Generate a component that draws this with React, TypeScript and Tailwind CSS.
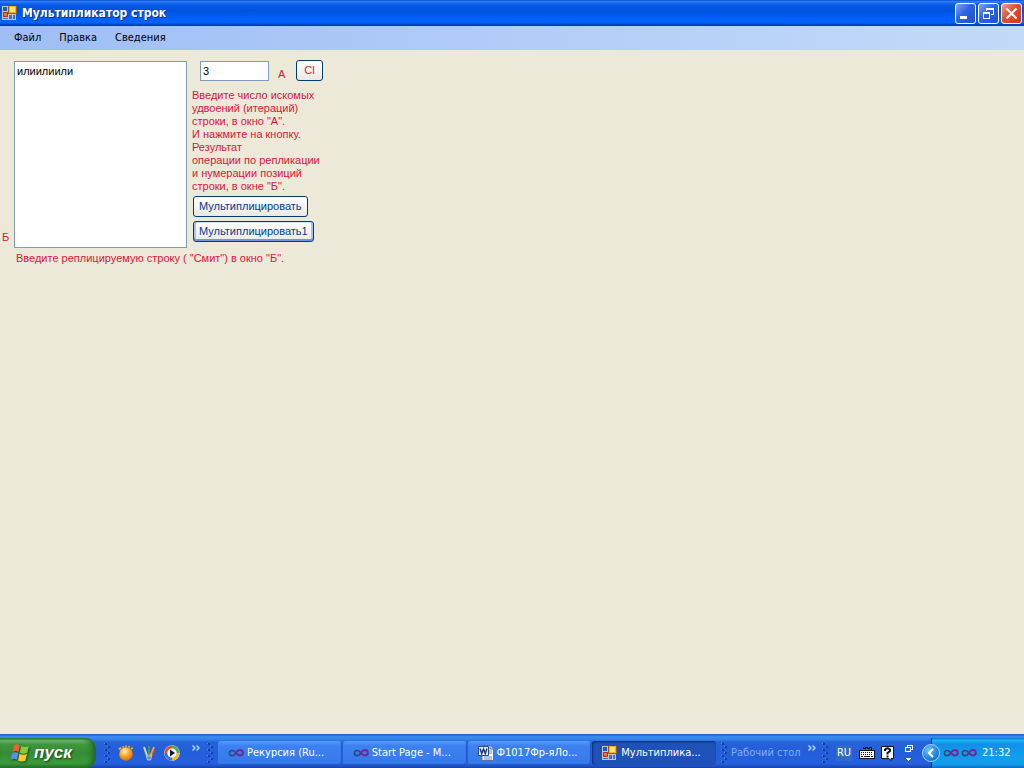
import * as React from 'react';
import { clsx } from 'clsx';

const uiFont = "font-['DejaVu_Sans_Condensed','DejaVu_Sans',sans-serif]";

const FormIcon = () => (
  <svg className="w-4 h-4 shrink-0" viewBox="0 0 16 16" shapeRendering="crispEdges" aria-hidden="true">
    <rect x="0" y="1" width="14" height="14" fill="#c4c8cc" />
    <rect x="1" y="2" width="4" height="4" fill="#2458c8" />
    <rect x="1" y="7" width="5" height="5" fill="#c82818" />
    <rect x="2" y="8" width="3" height="3" fill="#f07040" />
    <rect x="1" y="13" width="5" height="1" fill="#3a6ce0" />
    <rect x="7" y="10" width="3" height="4" fill="#3a6ce0" />
    <rect x="11" y="10" width="2" height="4" fill="#3a6ce0" />
    <rect x="6" y="1" width="9" height="8" fill="#8c6410" />
    <rect x="7" y="1" width="7" height="7" fill="#f0b020" />
    <rect x="8" y="2" width="5" height="5" fill="#ffe070" />
  </svg>
);

const StudioIcon = () => (
  <svg className="w-4 h-4 shrink-0" viewBox="0 0 16 16" fill="none" aria-hidden="true">
    <path d="M8 8C6.500 5.500 5 5.500 4 5.500a2.600 2.600 0 0 0 0 5.200c1.500 0 2.500-.7 4-2.700" stroke="#274c78" strokeWidth="1.600" />
    <path d="M7 10c1-2.500 2.500-5 5-5a2.800 2.800 0 0 1 0 5.600c-1.800 0-2.600-1-4-2.600" stroke="#6b2a98" strokeWidth="2" />
    <path d="M4 7.500h2M11 8h2" stroke="#4c8498" />
  </svg>
);

const WordIcon = () => (
  <svg className="w-4 h-4 shrink-0" viewBox="0 0 16 16" aria-hidden="true">
    <path d="M4 .5h8l3.500 3.500v11.500H4z" fill="#f8faff" stroke="#59709e" />
    <path d="M12 .5V4h3.500" fill="#c4d2f0" stroke="#59709e" />
    <path d="M11 6h3M11 8h3M6 12h8M6 14h8" stroke="#7088b8" />
    <path d="M.5 1.500h10v9H.5z" fill="#e8f0ff" stroke="#274888" />
    <path d="M2 3.500l1.700 5L5.500 4l1.800 4.500L9 3.500" fill="none" stroke="#1c3c88" strokeWidth="1.500" />
  </svg>
);

const FlagIcon = () => (
  <svg className="w-5 h-5 shrink-0 drop-shadow-[1px_1px_1px_#1a4a1a]" viewBox="0 0 18 18" aria-hidden="true">
    <path d="M3.500 2C5.500.8 7.500 1 9 2L7.700 8c-1.700-1-3.700-1-5.500 0z" fill="#f0622c" />
    <path d="M10 2.600c2 1.200 4.500 1.200 7 0L15.500 9c-2.300 1-4.600 1-6.700-.4z" fill="#86cc38" />
    <path d="M2 9c2-1 3.800-1 5.500 0l-1.300 6C4.500 14 2.700 14 .6 15z" fill="#5c8cf4" />
    <path d="M8.500 9.700c2 1.200 4.300 1.200 6.800.2L13.800 16c-2.300 1-4.600 1-6.500-.3z" fill="#fbc92c" />
  </svg>
);

const BallIcon = () => (
  <svg className="w-4 h-4" viewBox="0 0 16 16" aria-hidden="true">
    <defs>
      <radialGradient id="ball" cx=".4" cy=".3" r=".7">
        <stop offset="0" stopColor="#fff6d0" />
        <stop offset=".4" stopColor="#ffb838" />
        <stop offset="1" stopColor="#e46800" />
      </radialGradient>
    </defs>
    <circle cx="8" cy="9" r="6.800" fill="url(#ball)" />
    <path d="M1 4.500l2-2M4.500 2.500l1.500-1M8 2V.500M10.500 2.500l1-1.500M13 4l1.800-1.300" stroke="#f4a030" strokeWidth="1.800" />
  </svg>
);

const BrushesIcon = () => (
  <svg className="w-4 h-4" viewBox="0 0 16 16" fill="none" aria-hidden="true">
    <path d="M6.500 12L3 2" stroke="#d8d0b8" strokeWidth="2" />
    <path d="M8 12V1" stroke="#48a850" strokeWidth="1.600" />
    <path d="M9 12l4-10" stroke="#e8a830" strokeWidth="2" />
    <path d="M10 13L14 5" stroke="#d03820" strokeWidth="1.600" />
    <path d="M5 9l1.500 6h3L11 9" fill="#9cb0cc" fillOpacity=".5" stroke="#bcc8dc" />
  </svg>
);

const MediaIcon = () => (
  <svg className="w-4 h-4" viewBox="0 0 16 16" fill="none" aria-hidden="true">
    <circle cx="8" cy="8" r="7.800" fill="#dce8f8" />
    <path d="M2 8a6 6 0 0 1 6-6" stroke="#e85020" strokeWidth="3" />
    <path d="M8 2a6 6 0 0 1 6 6" stroke="#50ac38" strokeWidth="3" />
    <path d="M14 8a6 6 0 0 1-6 6" stroke="#f4b820" strokeWidth="3" />
    <path d="M8 14a6 6 0 0 1-6-6" stroke="#3470d8" strokeWidth="3" />
    <circle cx="8" cy="8" r="4.500" fill="#f4f8ff" />
    <path d="M6 4.500L11 8l-5 3.500z" fill="#101828" />
  </svg>
);

const Grip = () => (
  <svg className="w-1.5 h-5 shrink-0" viewBox="0 0 6 20" shapeRendering="crispEdges" aria-hidden="true">
    {[0, 6, 12, 18].map((y) => (
      <React.Fragment key={y}>
        <rect x="1" y={y} width="2" height="2" fill="#103ca0" />
        <rect x="0" y={y} width="1" height="1" fill="#4a94f0" />
        {y < 18 && <rect x="4" y={y + 3} width="2" height="2" fill="#103ca0" />}
        {y < 18 && <rect x="3" y={y + 3} width="1" height="1" fill="#4a94f0" />}
      </React.Fragment>
    ))}
  </svg>
);

const Chevrons = () => (
  <svg className="w-2 h-1.5 mb-2.5 shrink-0" viewBox="0 0 8 6" fill="none" stroke="#b8d8ff" strokeWidth="1.400" aria-hidden="true">
    <path d="M.5.5L3 3 .5 5.500M4.500.5L7 3 4.500 5.500" />
  </svg>
);

const captionClass =
  'w-[21px] h-[21px] rounded-[3px] border border-white flex items-center justify-center';

const TitleBar = () => (
  <header className="h-[26px] shrink-0 flex items-center pl-0.5 pr-0.5 bg-[linear-gradient(#0a4ad0_0,#2f80f8_6%,#0a5ce8_16%,#0050e0_40%,#0061fa_72%,#0064ff_86%,#0048c8_94%,#0038a8_100%)]">
    <FormIcon />
    <h1 className={`${uiFont} ml-1 flex-1 text-[12px] font-bold text-white [text-shadow:1px_1px_#0a2a80]`}>
      Мультипликатор строк
    </h1>
    <div className="flex gap-0.5">
      <button type="button" aria-label="Свернуть" className={clsx(captionClass, 'bg-[linear-gradient(135deg,#7fa4f8,#2c62e4_45%,#1d50d8)]')}>
        <svg className="w-[13px] h-[13px]" viewBox="0 0 13 13" shapeRendering="crispEdges">
          <path d="M1 9h7v3H1z" fill="#fff" />
        </svg>
      </button>
      <button type="button" aria-label="Восстановить" className={clsx(captionClass, 'bg-[linear-gradient(135deg,#7fa4f8,#2c62e4_45%,#1d50d8)]')}>
        <svg className="w-[13px] h-[13px]" viewBox="0 0 13 13" fill="none" stroke="#fff" shapeRendering="crispEdges">
          <path d="M4.500 4V1.500h7v6H9M4 2.500h8M1.500 5.500h6v6h-6zM1 6.500h7" />
        </svg>
      </button>
      <button type="button" aria-label="Закрыть" className={clsx(captionClass, 'bg-[linear-gradient(135deg,#f0a088,#e0502c_45%,#cc3c14)]')}>
        <svg className="w-[13px] h-[13px]" viewBox="0 0 13 13" stroke="#fff" strokeWidth="2.200">
          <path d="M1.500 1.500l10 10M11.500 1.500l-10 10" />
        </svg>
      </button>
    </div>
  </header>
);

const MenuBar = () => (
  <nav className={`${uiFont} h-6 shrink-0 flex items-center gap-[18px] px-3.5 text-[11px] text-black bg-linear-to-r from-[#9ebef5] to-[#c4daf9]`}>
    {['Файл', 'Правка', 'Сведения'].map((item) => (
      <button key={item} type="button">{item}</button>
    ))}
  </nav>
);

const formButton =
  'h-[21px] whitespace-nowrap rounded-[3px] border border-[#003c74] bg-linear-to-b from-white to-[#ebe9e0]';

const MainForm = () => (
  <main className="flex-1 min-h-0 pt-[11px] bg-[#ece9d8] text-[#dc143c] font-['Liberation_Sans',Arial,sans-serif] text-[11px] leading-[13px]">
    <div className="flex">
      <label htmlFor="source" className="w-3.5 pl-0.5 pb-1 self-end">Б</label>
      <textarea
        id="source"
        defaultValue="илиилиили"
        className="w-[173px] h-[187px] resize-none border border-[#7f9db9] bg-white px-0.5 py-[3px] text-black outline-none"
      />
      <div className="ml-[5px]">
        <div className="flex items-end pl-2 h-5">
          <input
            id="count"
            defaultValue="3"
            className="w-[69px] h-5 border border-[#7f9db9] bg-white px-0.5 text-black outline-none"
          />
          <label htmlFor="count" className="w-[27px] pl-[9px]">А</label>
          <button type="button" className={clsx(formButton, 'w-[27px]')}>Cl</button>
        </div>
        <p className="mt-2">
          Введите число искомых<br />
          удвоений (итераций)<br />
          строки, в окно "А".<br />
          И нажмите на кнопку.<br />
          Результат<br />
          операции по репликации<br />
          и нумерации позиций<br />
          строки, в окне "Б".
        </p>
        <div className="mt-[3px] ml-px flex flex-col items-start gap-1 text-[#003c90]">
          <button type="button" className={clsx(formButton, 'px-[5px]')}>Мультиплицировать</button>
          <button type="button" className={clsx(formButton, 'px-[5px] shadow-[inset_0_-2px_#7690e8,inset_2px_0_#a9c1f0,inset_-2px_0_#a9c1f0,inset_0_1px_#cee7ff]')}>
            Мультиплицировать1
          </button>
        </div>
      </div>
    </div>
    <p className="mt-1 ml-4">Введите реплицируемую строку ( "Смит") в окно "Б".</p>
  </main>
);

const tasks = [
  { title: 'Рекурсия (Ru...', icon: <StudioIcon />, active: false },
  { title: 'Start Page - M...', icon: <StudioIcon />, active: false },
  { title: 'Ф1017Фр-яЛо...', icon: <WordIcon />, active: false },
  { title: 'Мультиплика...', icon: <FormIcon />, active: true },
];

const Taskbar = () => (
  <footer className={`${uiFont} h-[34px] shrink-0 flex text-[11px] text-white bg-[linear-gradient(#1f54c8_0,#3b8cf0_8%,#3282e8_16%,#2562d8_24%,#245edb_60%,#2460de_88%,#1941a5_100%)]`}>
    <button
      type="button"
      className="mt-1 w-24 shrink-0 flex items-center gap-1 pl-2.5 rounded-r-[10px] bg-[linear-gradient(#2c7a2c_0,#72b872_8%,#3c983c_22%,#368c36_50%,#3a9c3a_85%,#2a702a_100%)] shadow-[inset_-4px_0_5px_#236a23]"
    >
      <FlagIcon />
      <span className="font-['Liberation_Sans',Arial,sans-serif] text-[17px] leading-5 font-bold italic [text-shadow:1px_1px_2px_#143c14]">пуск</span>
    </button>

    {/* quick launch */}
    <div className="w-[122px] shrink-0 flex items-center pt-1 pl-2">
      <Grip />
      <div className="ml-2 flex gap-[7px]">
        <button type="button" aria-label="Браузер"><BallIcon /></button>
        <button type="button" aria-label="Рисование"><BrushesIcon /></button>
        <button type="button" aria-label="Проигрыватель"><MediaIcon /></button>
      </div>
      <button type="button" aria-label="Ещё" className="ml-3"><Chevrons /></button>
      <div className="ml-[7px]"><Grip /></div>
    </div>

    <div className="flex-1 min-w-0 flex gap-px pt-[7px] pb-[3px]">
      {tasks.map((task) => (
        <button
          key={task.title}
          type="button"
          className={clsx(
            'flex-1 min-w-0 flex items-center gap-[3px] pl-2.5 rounded-[3px] whitespace-nowrap overflow-hidden',
            task.active
              ? 'bg-[#1e52b7] shadow-[inset_1px_1px_2px_#0c2c78]'
              : 'bg-linear-to-b from-[#5a9afa] via-[#3c81f3] via-20% to-[#3678ea] shadow-[inset_-1px_-1px_1px_#2158c8]'
          )}
        >
          {task.icon}
          <span>{task.title}</span>
        </button>
      ))}
    </div>

    <div className="w-[215px] shrink-0 flex items-center pt-1 pl-[5px]">
      <Grip />
      <span className="ml-1 w-[77px] text-[#7fb0f4] whitespace-nowrap">Рабочий стол</span>
      <button type="button" aria-label="Рабочий стол: ещё"><Chevrons /></button>
      <div className="ml-1.5"><Grip /></div>
      <button type="button" className="ml-2 w-4 h-4 flex items-center justify-center bg-[#316ac5]">RU</button>
      <button type="button" aria-label="Клавиатура" className="ml-[7px]">
        <svg className="w-4 h-4" viewBox="0 0 16 16" shapeRendering="crispEdges">
          <path d="M4.500 2v1.500h2V2.500h2v1h2v-1h2v3" fill="none" stroke="#101010" />
          <path d="M0 5h16v9H0z" fill="#101010" />
          <path d="M1 6h14v7H1z" fill="#fff" />
          <path d="M2 7.500h12M2 9.500h12" stroke="#101010" strokeDasharray="1 1" />
          <path d="M2 11.500h2M5 11.500h6M12 11.500h2" stroke="#101010" />
        </svg>
      </button>
      <button type="button" aria-label="Справка" className="ml-[6px]">
        <svg className="w-3.5 h-4" viewBox="0 0 14 16">
          <path d="M.5 1.500h12v12H10v2l-2-2H.5z" fill="#fff" stroke="#101010" />
          <path d="M4 6V4.500Q6.500 2 9 4.500V6L6.500 8v1.500" fill="none" stroke="#101030" strokeWidth="2" />
          <path d="M5.500 10.500h2v2h-2z" fill="#101030" />
        </svg>
      </button>
      <button type="button" aria-label="Параметры языковой панели" className="ml-[9px]">
        <svg className="w-2.5 h-[18px]" viewBox="0 0 10 18" fill="none" shapeRendering="crispEdges">
          <path d="M3.500 3V1.500h5v4H7M1.500 3.500h5v4h-5z" stroke="#fff" />
          <path d="M2 14h5l-2.500 3z" fill="#fff" />
        </svg>
      </button>
    </div>

    <div className="relative mt-1 w-[93px] shrink-0 flex items-center pl-2 bg-[linear-gradient(#0c78d8_0,#19b9f3_8%,#1290e8_20%,#119dee_60%,#129cec_88%,#0c68c0_100%)] border-l border-[#092e88]">
      <button
        type="button"
        aria-label="Показать скрытые значки"
        className="absolute -left-2.5 w-[18px] h-[18px] rounded-full border border-[#a4d4ff] bg-[radial-gradient(circle_at_35%_30%,#70c0ff,#1c80e0_60%,#1058b8)] flex items-center justify-center"
      >
        <svg className="w-2 h-2.5" viewBox="0 0 8 10" fill="none" stroke="#fff" strokeWidth="2">
          <path d="M6 1L2 5l4 4" />
        </svg>
      </button>
      <div className="ml-[3px] flex gap-0.5">
        <StudioIcon />
        <StudioIcon />
      </div>
      <time className="ml-[5px]">21:32</time>
    </div>
  </footer>
);

export default function App() {
  return (
    <div className="h-screen flex flex-col overflow-hidden">
      <TitleBar />
      <MenuBar />
      <MainForm />
      <Taskbar />
    </div>
  );
}
